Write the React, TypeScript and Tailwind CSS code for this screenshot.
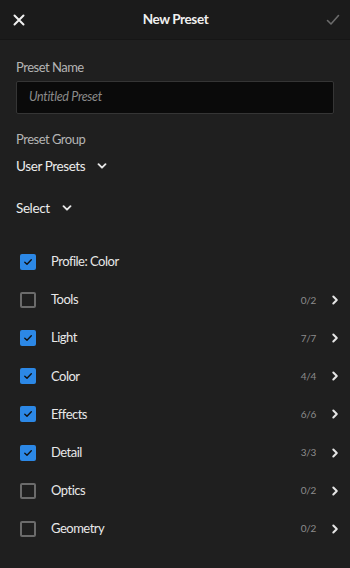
import React from "react";

const rows = [
  { label: "Profile: Color", checked: true, count: "" },
  { label: "Tools", checked: false, count: "0/2" },
  { label: "Light", checked: true, count: "7/7" },
  { label: "Color", checked: true, count: "4/4" },
  { label: "Effects", checked: true, count: "6/6" },
  { label: "Detail", checked: true, count: "3/3" },
  { label: "Optics", checked: false, count: "0/2" },
  { label: "Geometry", checked: false, count: "0/2" },
];

function Chevron() {
  return (
    <svg width="10" height="10" viewBox="0 0 10 10">
      <path d="M1.5 3.2 L5 6.7 L8.5 3.2" fill="none" stroke="#e6e6e6" strokeWidth="1.9" strokeLinecap="round" strokeLinejoin="round" />
    </svg>
  );
}

function ChevronRight() {
  return (
    <svg width="10" height="10" viewBox="0 0 10 10">
      <path d="M3.3 1.5 L6.8 5 L3.3 8.5" fill="none" stroke="#e6e6e6" strokeWidth="2" strokeLinecap="round" strokeLinejoin="round" />
    </svg>
  );
}

function Checkbox({ checked }: { checked: boolean }) {
  if (checked) {
    return (
      <div className="w-[16px] h-[16px] rounded-[2px] bg-[#2c88e6] flex items-center justify-center">
        <svg width="10" height="10" viewBox="0 0 10 10">
          <path d="M1.8 5.2 L4 7.3 L8.3 2.8" fill="none" stroke="#111" strokeWidth="1.4" strokeLinecap="round" strokeLinejoin="round" />
        </svg>
      </div>
    );
  }
  return <div className="w-[16px] h-[16px] rounded-[2px] border-2 border-[#6b6b6b]" />;
}

export default function App() {
  return (
    <div
      className="w-[350px] h-[568px] bg-[#1f1f1f] text-[#e8e8e8] overflow-hidden"
      style={{ fontFamily: 'Lato, "Open Sans", sans-serif' }}
    >
      <div className="h-[40px] bg-[#1b1b1b] border-b border-[#161616] flex items-center justify-between px-[12px]">
        <svg width="12" height="12" viewBox="0 0 12 12" className="ml-[1px]">
          <path d="M1.5 1.5 L10.5 10.5 M10.5 1.5 L1.5 10.5" stroke="#f0f0f0" strokeWidth="2" strokeLinecap="round" />
        </svg>
        <div className="text-[13.5px] font-bold text-[#f0f0f0] tracking-[-0.4px]">New Preset</div>
        <svg width="14" height="12" viewBox="0 0 14 12" className="mr-[-2px]">
          <path d="M1.5 6.5 L5 10 L12.5 1.5" fill="none" stroke="#6b6b6b" strokeWidth="1.6" strokeLinecap="round" strokeLinejoin="round" />
        </svg>
      </div>

      <div className="px-[16px]">
        <div className="pt-[19px] text-[13px] text-[#b4b4b4] leading-[17px] tracking-[-0.5px]">Preset Name</div>
        <div className="mt-[5px] h-[33px] bg-[#0a0a0a] border border-[#353535] rounded-[2px] flex items-center px-[12px]">
          <span className="text-[12.5px] italic text-[#8a8a8a] tracking-[-0.3px]">Untitled Preset</span>
        </div>

        <div className="mt-[17px] text-[13px] text-[#b4b4b4] leading-[17px] tracking-[-0.5px]">Preset Group</div>
        <div className="mt-[9px] flex items-center gap-[12px]">
          <span className="text-[13.5px] text-[#ececec] leading-[18px] tracking-[-0.4px]">User Presets</span>
          <Chevron />
        </div>

        <div className="mt-[24px] flex items-center gap-[12px]">
          <span className="text-[13.5px] text-[#ececec] leading-[18px] tracking-[-0.4px]">Select</span>
          <Chevron />
        </div>

        <div className="mt-[26px] flex flex-col">
          {rows.map((r) => (
            <div key={r.label} className="h-[38.1px] flex items-center">
              <div className="ml-[4px]">
                <Checkbox checked={r.checked} />
              </div>
              <span className="ml-[15px] text-[13px] text-[#e8e8e8] flex-1 tracking-[-0.5px]">{r.label}</span>
              {r.count && (
                <>
                  <span className="text-[10px] text-[#8c8c8c] tracking-[-0.3px]">{r.count}</span>
                  <span className="ml-[14px] mr-[-6px] flex items-center">
                    <ChevronRight />
                  </span>
                </>
              )}
            </div>
          ))}
        </div>
      </div>
    </div>
  );
}
